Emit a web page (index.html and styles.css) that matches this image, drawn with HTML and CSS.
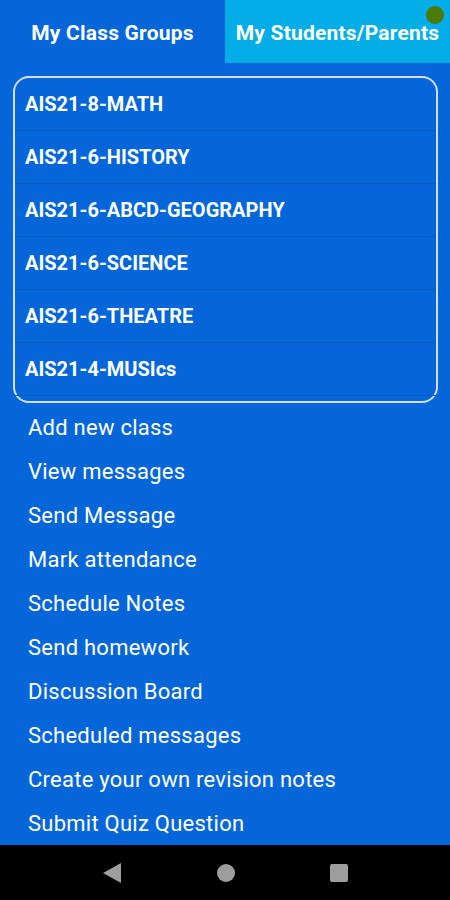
FILE: index.html
```html
<!DOCTYPE html>
<html lang="en">
<head>
  <meta charset="UTF-8" />
  <title>My Class Groups</title>
  <link rel="stylesheet" href="styles.css">
</head>
<body>
  <div class="screen">
    <div class="tabs">
      <div class="tab tab-active">My Class Groups</div>
      <div class="tab tab-other">My Students/Parents<span class="dot"></span></div>
    </div>

    <div class="groups">
      <div class="group">AIS21-8-MATH</div>
      <div class="group">AIS21-6-HISTORY</div>
      <div class="group">AIS21-6-ABCD-GEOGRAPHY</div>
      <div class="group">AIS21-6-SCIENCE</div>
      <div class="group">AIS21-6-THEATRE</div>
      <div class="group">AIS21-4-MUSIcs</div>
    </div>

    <ul class="menu">
      <li>Add new class</li>
      <li>View messages</li>
      <li>Send Message</li>
      <li>Mark attendance</li>
      <li>Schedule Notes</li>
      <li>Send homework</li>
      <li>Discussion Board</li>
      <li>Scheduled messages</li>
      <li>Create your own revision notes</li>
      <li>Submit Quiz Question</li>
    </ul>
  </div>

  <div class="navbar">
    <svg width="22" height="22" viewBox="0 0 22 22"><polygon points="20,1 20,21 2,11" fill="#9e9e9e"/></svg>
    <svg width="20" height="20" viewBox="0 0 20 20"><circle cx="10" cy="10" r="9" fill="#9e9e9e"/></svg>
    <svg width="20" height="20" viewBox="0 0 20 20"><rect x="1" y="1" width="18" height="18" rx="2" fill="#9e9e9e"/></svg>
  </div>
</body>
</html>
```

FILE: styles.css
```css
html, body {
  margin: 0;
  padding: 0;
}
body {
  font-family: Roboto, "Noto Sans", sans-serif;
  background-color: #0466d8;
  color: #fff;
  width: 450px;
  height: 900px;
  display: flex;
  flex-direction: column;
}
.screen {
  flex: 1;
  overflow: hidden;
}
.tabs {
  display: flex;
  height: 63px;
}
.tab {
  flex: 0 0 50%;
  display: flex;
  align-items: center;
  justify-content: center;
  font-size: 21px;
  font-weight: bold;
  letter-spacing: 0.2px;
  padding-top: 2px;
  box-sizing: border-box;
}
.tab-other {
  background-color: #03ade6;
  position: relative;
}
.dot {
  position: absolute;
  top: 6px;
  right: 6px;
  width: 18px;
  height: 18px;
  border-radius: 50%;
  background-color: #4b7a06;
}
.groups {
  margin: 13px 12px 0 13px;
  border: 2px solid #d2defa;
  border-radius: 16px;
  padding-bottom: 5px;
}
.group {
  height: 53px;
  border-bottom: 1px solid #0a5bbf;
  display: flex;
  align-items: center;
  padding-left: 10px;
  box-sizing: border-box;
  font-size: 20px;
  font-weight: bold;
}
.menu {
  list-style: none;
  margin: 4px 0 0 0;
  padding: 0 0 0 28px;
}
.menu li {
  height: 44px;
  line-height: 42px;
  font-size: 22px;
  letter-spacing: 0.25px;
}
.navbar {
  height: 55px;
  background-color: #000;
  display: flex;
  align-items: center;
  justify-content: space-between;
  padding: 0 101px 0 101px;
  flex-shrink: 0;
}
```
